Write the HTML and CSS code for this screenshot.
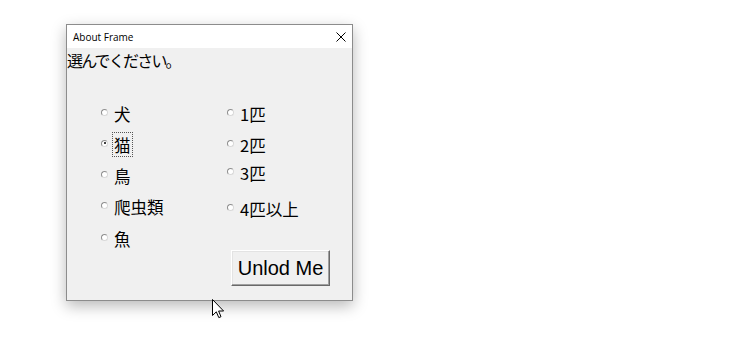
FILE: index.html
```html
<!DOCTYPE html>
<html lang="ja">
<head>
<meta charset="utf-8">
<title>About Frame</title>
<link rel="stylesheet" href="styles.css">
</head>
<body>
<div class="window">
  <div class="titlebar">
    <span class="title">About Frame</span>
    <svg class="close" width="10" height="10" viewBox="0 0 10 10"><path d="M0.5 0.5 L9.5 9.5 M9.5 0.5 L0.5 9.5" stroke="#000" stroke-width="1" fill="none"/></svg>
  </div>
  <div class="client">
    <div class="heading">選んでください。</div>
    <div class="options">
      <div class="col col-left">
        <div class="opt"><span class="radio"></span><span class="label">犬</span></div>
        <div class="opt"><span class="radio checked"></span><span class="label focused">猫</span></div>
        <div class="opt"><span class="radio"></span><span class="label">鳥</span></div>
        <div class="opt"><span class="radio"></span><span class="label">爬虫類</span></div>
        <div class="opt"><span class="radio"></span><span class="label">魚</span></div>
      </div>
      <div class="col col-right">
        <div class="opt r1"><span class="radio"></span><span class="label">1匹</span></div>
        <div class="opt r2"><span class="radio"></span><span class="label">2匹</span></div>
        <div class="opt r3"><span class="radio"></span><span class="label">3匹</span></div>
        <div class="opt r4"><span class="radio"></span><span class="label">4匹以上</span></div>
        <button class="btn">Unlod Me</button>
      </div>
    </div>
  </div>
</div>
<svg class="cursor" width="13" height="20" viewBox="0 0 13 20"><path d="M0.5 0.5 L0.5 16.5 L4.3 12.8 L6.8 18.6 L9 17.7 L6.6 12 L11.6 12 Z" fill="#fff" stroke="#000" stroke-width="1" stroke-linejoin="miter"/></svg>
</body>
</html>
```
FILE: styles.css
```css
html, body {
  margin: 0;
  padding: 0;
  background: #ffffff;
}
body {
  position: relative;
  width: 750px;
  height: 350px;
  overflow: hidden;
  font-family: "Noto Sans CJK JP", "Noto Sans", sans-serif;
}
.window {
  margin: 24px 0 0 66px;
  width: 285px;
  height: 275px;
  border: 1px solid #8c8c8c;
  background: #f0f0f0;
  box-shadow: 0 5px 14px rgba(0, 0, 0, 0.28);
  display: flex;
  flex-direction: column;
}
.titlebar {
  height: 23px;
  background: #ffffff;
  display: flex;
  align-items: center;
  flex: none;
}
.title {
  margin-left: 6px;
  font-family: "Open Sans", "Noto Sans", sans-serif;
  font-size: 10px;
  color: #000;
  line-height: 1;
}
.close {
  margin-left: auto;
  margin-right: 6px;
  display: block;
}
.client {
  flex: 1;
  background: #f0f0f0;
  overflow: hidden;
}
.heading {
  margin-top: 2px;
  font-size: 16px;
  line-height: 20px;
  letter-spacing: -1.8px;
  color: #000;
  white-space: nowrap;
}
.options {
  display: flex;
  margin-top: 28px;
  margin-left: 34px;
}
.col {
  display: flex;
  flex-direction: column;
}
.col-left {
  width: 126px;
}
.opt {
  height: 31.25px;
  display: flex;
  align-items: center;
}
.col-right .opt {
  height: 31px;
}
.col-right .r3 {
  margin-top: -3px;
}
.col-right .r4 {
  margin-top: 5px;
}
.radio {
  width: 5px;
  height: 5px;
  border: 1px solid #8e8e8e;
  border-right-color: #d8d8d8;
  border-bottom-color: #d8d8d8;
  border-radius: 50%;
  background: #ffffff;
  position: relative;
  flex: none;
  margin-top: -3px;
}
.radio.checked::after {
  content: "";
  position: absolute;
  left: 1.5px;
  top: 1.5px;
  width: 2px;
  height: 2px;
  border-radius: 50%;
  background: #000;
}
.label {
  margin-left: 6px;
  font-size: 16.5px;
  line-height: 20px;
  color: #000;
  white-space: nowrap;
}
.label.focused {
  margin-left: 4px;
  padding: 2px 1px 1px 1px;
  border: 1px dotted #555;
}
.btn {
  margin-top: 26px;
  margin-left: 4px;
  width: 99px;
  height: 36px;
  padding: 0;
  background: #f0f0f0;
  border-top: 1px solid #ffffff;
  border-left: 1px solid #ffffff;
  border-right: 1px solid #696969;
  border-bottom: 1px solid #696969;
  box-shadow: inset -1px -1px 0 #a0a0a0, inset 1px 1px 0 #e3e3e3;
  font-family: "Liberation Sans", Arial, sans-serif;
  font-size: 20px;
  color: #000;
  line-height: 1;
}
.cursor {
  position: absolute;
  left: 212px;
  top: 299px;
}
```
